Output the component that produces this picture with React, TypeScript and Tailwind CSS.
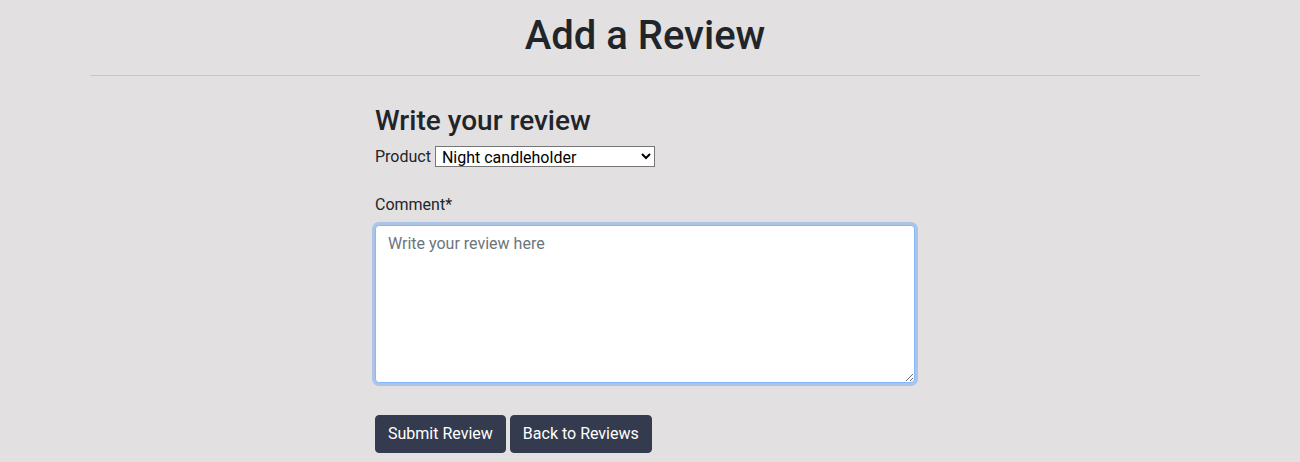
import React from 'react';

export default function App() {
  return (
    <div className="min-h-[462px] bg-[#e2e0e1] text-[#212529] font-['Roboto',sans-serif] text-base leading-6">
      <div className="ml-[90px] w-[1110px]">
        <h1 className="pt-3 text-center text-[40px] font-medium leading-[48px]">Add a Review</h1>
        <hr className="mt-[15px] mb-0 border-t border-[#c8c6c7]" />
        <div className="ml-[285px] w-[540px] pt-7">
          <h3 className="text-[28px] font-medium leading-[34px] mb-2">Write your review</h3>
          <div className="flex items-start gap-1">
            <label htmlFor="product" className="-mt-px">Product</label>
            <select
              id="product"
              defaultValue="night"
              className="h-[21px] w-[220px] border border-[#767676] bg-white px-0.5 text-base leading-5 text-black"
            >
              <option value="night">Night candleholder</option>
            </select>
          </div>
          <label htmlFor="comment" className="mt-6 mb-2 block">Comment*</label>
          <textarea
            id="comment"
            placeholder="Write your review here"
            className="block h-[158px] w-full rounded border border-[#86b7fe] bg-white px-3 py-1.5 text-base leading-6 shadow-[0_0_0_3px_rgba(13,110,253,0.25)] outline-none placeholder:text-[#6c757d]"
          />
          <div className="mt-8 flex gap-[4px]">
            <button className="rounded border border-[#353b4f] bg-[#353b4f] px-3 py-1.5 text-white">Submit Review</button>
            <button className="rounded border border-[#353b4f] bg-[#353b4f] px-3 py-1.5 text-white">Back to Reviews</button>
          </div>
        </div>
      </div>
    </div>
  );
}
